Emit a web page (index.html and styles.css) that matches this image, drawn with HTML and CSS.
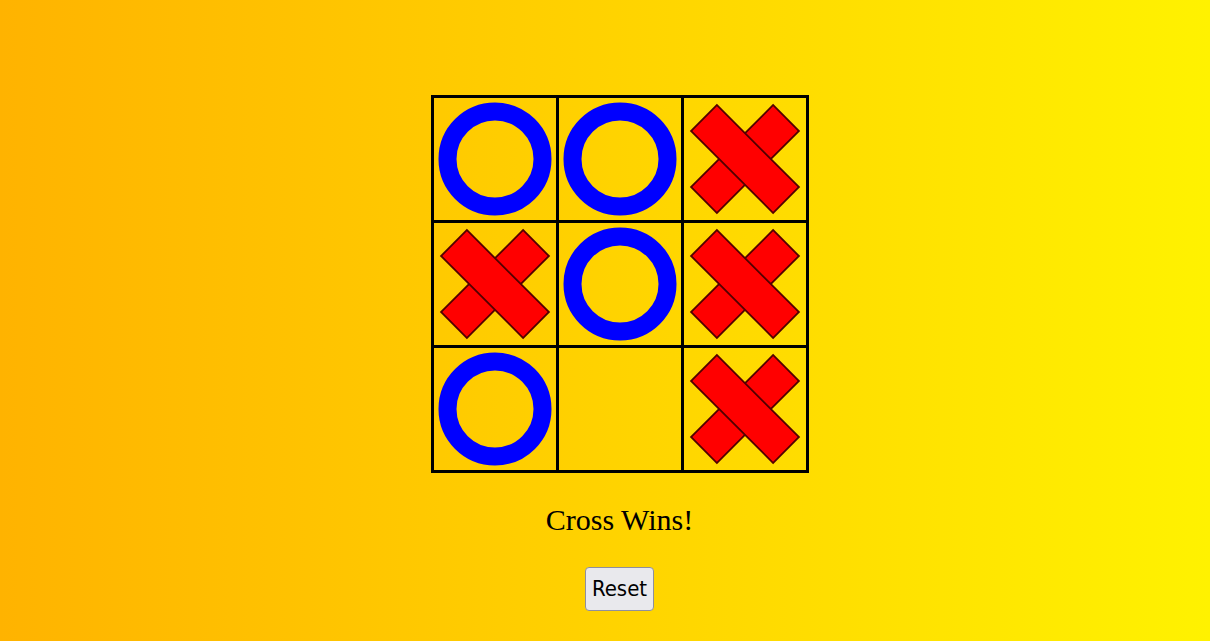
FILE: index.html
```html
<!DOCTYPE html>
<html>
<head>
<meta charset="utf-8">
<link rel="stylesheet" href="styles.css">
</head>
<body>
<main class="game">
  <div class="board">
    <div class="cell"><svg class="mark" viewBox="0 0 122 122"><circle cx="61" cy="61" r="47.5" class="ring"/></svg></div>
    <div class="cell"><svg class="mark" viewBox="0 0 122 122"><circle cx="61" cy="61" r="47.5" class="ring"/></svg></div>
    <div class="cell"><svg class="mark" viewBox="0 0 122 122"><rect x="42.75" y="3" width="36.5" height="116" class="bar" transform="rotate(45 61 61)"/><rect x="42.75" y="3" width="36.5" height="116" class="bar" transform="rotate(-45 61 61)"/></svg></div>
    <div class="cell"><svg class="mark" viewBox="0 0 122 122"><rect x="42.75" y="3" width="36.5" height="116" class="bar" transform="rotate(45 61 61)"/><rect x="42.75" y="3" width="36.5" height="116" class="bar" transform="rotate(-45 61 61)"/></svg></div>
    <div class="cell"><svg class="mark" viewBox="0 0 122 122"><circle cx="61" cy="61" r="47.5" class="ring"/></svg></div>
    <div class="cell"><svg class="mark" viewBox="0 0 122 122"><rect x="42.75" y="3" width="36.5" height="116" class="bar" transform="rotate(45 61 61)"/><rect x="42.75" y="3" width="36.5" height="116" class="bar" transform="rotate(-45 61 61)"/></svg></div>
    <div class="cell"><svg class="mark" viewBox="0 0 122 122"><circle cx="61" cy="61" r="47.5" class="ring"/></svg></div>
    <div class="cell"></div>
    <div class="cell"><svg class="mark" viewBox="0 0 122 122"><rect x="42.75" y="3" width="36.5" height="116" class="bar" transform="rotate(45 61 61)"/><rect x="42.75" y="3" width="36.5" height="116" class="bar" transform="rotate(-45 61 61)"/></svg></div>
  </div>
  <p class="status">Cross Wins!</p>
  <button class="reset">Reset</button>
</main>
</body>
</html>
```

FILE: styles.css
```css
html, body {
  margin: 0;
  height: 100%;
}
body {
  background: linear-gradient(to right, #ffb300, #fff200);
  font-family: "Liberation Serif", "Times New Roman", serif;
  overflow: hidden;
}
.game {
  display: flex;
  flex-direction: column;
  align-items: center;
  padding-top: 95px;
  padding-left: 29px;
}
.board {
  display: grid;
  grid-template-columns: 125px 125px 122px;
  grid-template-rows: 125px 125px 122px;
  border: 3px solid #000;
}
.cell {
  box-sizing: border-box;
  border-right: 3px solid #000;
  border-bottom: 3px solid #000;
}
.cell:nth-child(3n) {
  border-right: none;
}
.cell:nth-child(n+7) {
  border-bottom: none;
}
.mark {
  display: block;
  width: 122px;
  height: 122px;
}
.ring {
  fill: none;
  stroke: #0000ff;
  stroke-width: 18;
}
.bar {
  fill: #ff0000;
  stroke: #520000;
  stroke-width: 1.8;
}
.status {
  margin: 30px 0 0;
  font-size: 30px;
  line-height: 34px;
  color: #000;
}
.reset {
  margin-top: 30px;
  font-family: "DejaVu Sans Condensed", "Noto Sans", sans-serif;
  font-size: 22px;
  line-height: 24px;
  padding: 9px 6px;
  color: #000;
  background: #e9e9ed;
  border: 1px solid #8f8f9d;
  border-radius: 4px;
}
```
